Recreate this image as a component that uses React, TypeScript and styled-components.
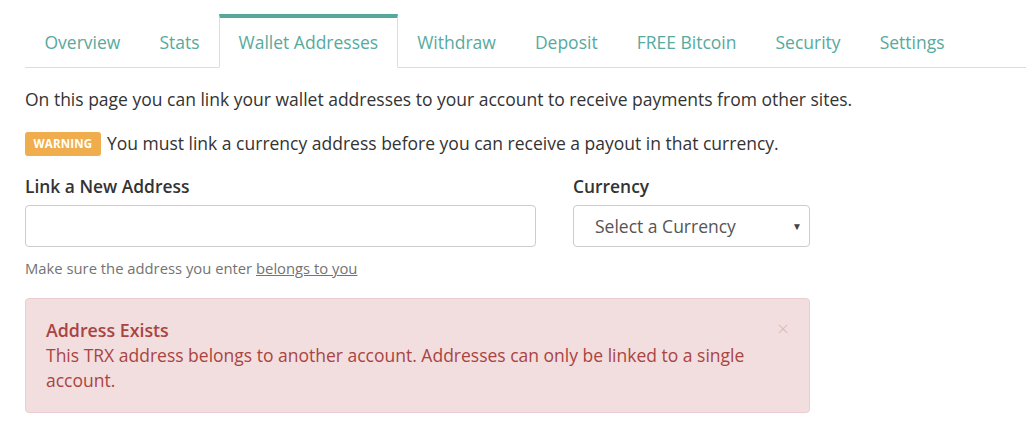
import styled, { createGlobalStyle } from 'styled-components';

const GlobalStyle = createGlobalStyle`
  body {
    margin: 0;
    background: #fff;
    font-family: "Open Sans", "Liberation Sans", sans-serif;
    color: #333;
  }
`;

const Page = styled.div`
  padding: 14px 0 0 25px;
`;

const Tabs = styled.ul`
  display: flex;
  margin: 0;
  padding: 0;
  list-style: none;
  border-bottom: 1px solid #ddd;
`;

const Tab = styled.li<{ $active?: boolean }>`
  margin-bottom: -1px;
  padding: 0 18.5px 2px;
  height: 54px;
  display: flex;
  align-items: center;
  font-size: 17.5px;
  color: #56aa9e;
  border: 1px solid ${(p) => (p.$active ? '#ddd' : 'transparent')};
  border-top: 4px solid ${(p) => (p.$active ? '#56a89a' : 'transparent')};
  border-bottom-color: ${(p) => (p.$active ? '#fff' : 'transparent')};
  background: ${(p) => (p.$active ? '#fff' : 'transparent')};
  box-sizing: border-box;
`;

const Lead = styled.p`
  margin: 19px 0 0;
  font-size: 17.5px;
  line-height: 25px;
`;

const WarningRow = styled.p`
  margin: 19px 0 0;
  font-size: 17.5px;
  line-height: 25px;
  display: flex;
  align-items: center;
  gap: 6px;
`;

const Badge = styled.span`
  display: inline-block;
  background: #f0ad4e;
  color: #fff;
  font-size: 11.5px;
  font-weight: 700;
  padding: 0 8.5px;
  height: 24px;
  line-height: 24px;
  border-radius: 3px;
  letter-spacing: 0.2px;
`;

const FormRow = styled.div`
  display: grid;
  grid-template-columns: 511px 237px;
  column-gap: 37px;
  margin-top: 18px;
`;

const Field = styled.div`
  display: flex;
  flex-direction: column;
`;

const Label = styled.label`
  font-size: 17.4px;
  font-weight: 600;
  line-height: 24px;
  margin-bottom: 7px;
`;

const Input = styled.input`
  box-sizing: border-box;
  height: 42px;
  width: 100%;
  border: 1px solid #ccc;
  border-radius: 4px;
  font: inherit;
  padding: 0 12px;
`;

const SelectBox = styled.div`
  position: relative;
  box-sizing: border-box;
  height: 42px;
  border: 1px solid #ccc;
  border-radius: 4px;
  display: flex;
  align-items: center;
  padding: 0 21px;
  font-size: 17.5px;
  color: #555;
`;

const Caret = styled.span`
  position: absolute;
  right: 7px;
  top: 13px;
  font-size: 10px;
  color: #444;
`;

const Help = styled.div`
  margin-top: 11px;
  font-size: 14.8px;
  color: #737373;
  line-height: 20px;

  a {
    color: #737373;
    text-decoration: underline;
  }
`;

const Alert = styled.div`
  position: relative;
  box-sizing: border-box;
  width: 785px;
  margin-top: 20px;
  padding: 19px 20px 19px;
  background: #f2dede;
  border: 1px solid #ebccd1;
  border-radius: 4px;
  color: #a94442;
  font-size: 17.5px;
  line-height: 25px;
`;

const AlertTitle = styled.div`
  font-weight: 600;
  font-size: 17.8px;
`;

const Close = styled.span`
  position: absolute;
  right: 20px;
  top: 17px;
  font-size: 21px;
  color: #dcb7b7;
  font-weight: 300;
`;

export default function App() {
  const tabs = ['Overview', 'Stats', 'Wallet Addresses', 'Withdraw', 'Deposit', 'FREE Bitcoin', 'Security', 'Settings'];
  return (
    <>
      <GlobalStyle />
      <Page>
        <Tabs>
          {tabs.map((t) => (
            <Tab key={t} $active={t === 'Wallet Addresses'}>
              {t}
            </Tab>
          ))}
        </Tabs>
        <Lead>On this page you can link your wallet addresses to your account to receive payments from other sites.</Lead>
        <WarningRow>
          <Badge>WARNING</Badge>
          You must link a currency address before you can receive a payout in that currency.
        </WarningRow>
        <FormRow>
          <Field>
            <Label>Link a New Address</Label>
            <Input type="text" />
            <Help>
              Make sure the address you enter <a href="#">belongs to you</a>
            </Help>
          </Field>
          <Field>
            <Label>Currency</Label>
            <SelectBox>
              Select a Currency
              <Caret>▼</Caret>
            </SelectBox>
          </Field>
        </FormRow>
        <Alert>
          <Close>×</Close>
          <AlertTitle>Address Exists</AlertTitle>
          This TRX address belongs to another account. Addresses can only be linked to a single account.
        </Alert>
      </Page>
    </>
  );
}
